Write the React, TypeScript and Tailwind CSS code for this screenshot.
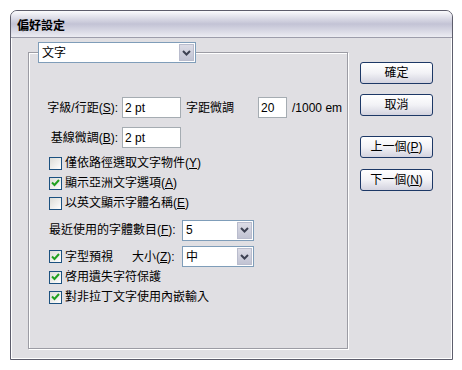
import React from 'react';

function Chevron() {
  return (
    <svg width="9" height="6" viewBox="0 0 9 6" className="block">
      <path d="M1 1l3.5 3.5L8 1" fill="none" stroke="#3d4152" strokeWidth="2" />
    </svg>
  );
}

function Check({ checked = false }: { checked?: boolean }) {
  return (
    <span className="flex h-[13px] w-[13px] shrink-0 items-center justify-center border border-[#1c5180] bg-gradient-to-br from-[#dcdcd7] to-white">
      {checked && (
        <svg width="9" height="8" viewBox="0 0 9 8" className="block">
          <path d="M1 3.5l2.5 2.5L8 1" fill="none" stroke="#21a121" strokeWidth="2" />
        </svg>
      )}
    </span>
  );
}

function Dropdown({ value, width }: { value: string; width: string }) {
  return (
    <div className={`flex h-[21px] ${width} border border-[#7f9db9] bg-white p-px`}>
      <div className="flex flex-1 items-center pl-[2px] leading-none">{value}</div>
      <div className="flex w-[15px] items-center justify-center border border-[#b9bccd] bg-gradient-to-b from-[#dcdce6] to-[#c1c3d3]">
        <Chevron />
      </div>
    </div>
  );
}

function TextBox({ value, width }: { value: string; width: string }) {
  return (
    <div className={`flex h-[21px] ${width} items-center border border-[#a5acb2] bg-white pl-[2px] leading-none`}>
      {value}
    </div>
  );
}

function CheckRow({ checked, children }: { checked?: boolean; children: React.ReactNode }) {
  return (
    <div className="flex h-[20px] items-center gap-[3px] pl-[20px]">
      <Check checked={checked} />
      <span className="leading-none">{children}</span>
    </div>
  );
}

function DlgButton({ children, className = '' }: { children: React.ReactNode; className?: string }) {
  return (
    <button className={`flex h-[22px] w-[73px] items-center justify-center rounded-[3px] border border-[#1d3866] bg-gradient-to-b from-white via-[#f2f2f6] to-[#d3d3df] leading-none ${className}`}>
      {children}
    </button>
  );
}

export default function App() {
  return (
    <div className="h-[370px] w-[462px] bg-white pl-[10px] pt-[10px] text-[12px] text-black font-['Liberation_Sans','Noto_Sans_CJK_TC',sans-serif]">
      <div className="flex h-[350px] w-[443px] flex-col rounded-t-[7px] border border-[#5d5d6c] bg-[#e0dfe3]">
        {/* title bar */}
        <div className="flex h-[26px] items-center rounded-t-[6px] bg-gradient-to-b from-[#fbfbfd] via-[#c3c3d5] to-[#ececf2] pl-[6px] pt-[4px]">
          <span className="font-bold leading-none">偏好設定</span>
        </div>

        <div className="flex flex-1 border-t border-[#9d9dab] shadow-[inset_1px_0_0_#fff,inset_-1px_0_0_#fff,inset_0_-1px_0_#fff]">
          {/* group box */}
          <div className="ml-[17px] mt-[14px] h-[297px] w-[320px] border border-[#9c9ca4] shadow-[1px_1px_0_#fff,inset_1px_1px_0_#fff]">
            <div className="-mt-[11px] ml-[9px] w-fit bg-[#e0dfe3]">
              <Dropdown value="文字" width="w-[158px]" />
            </div>

            <div className="mt-[34px] flex h-[21px] items-center">
              <span className="w-[89px] text-right leading-none">
                字級/行距(<u>S</u>):
              </span>
              <span className="w-[4px]" />
              <TextBox value="2 pt" width="w-[59px]" />
              <span className="ml-[5px] leading-none">字距微調</span>
              <span className="ml-[24px]">
                <TextBox value="20" width="w-[29px]" />
              </span>
              <span className="ml-[5px] leading-none">/1000 em</span>
            </div>

            <div className="mt-[9px] flex h-[21px] items-center">
              <span className="w-[89px] text-right leading-none">
                基線微調(<u>B</u>):
              </span>
              <span className="w-[4px]" />
              <TextBox value="2 pt" width="w-[59px]" />
            </div>

            <div className="mt-[5px]">
              <CheckRow>
                僅依路徑選取文字物件(<u>Y</u>)
              </CheckRow>
              <CheckRow checked>
                顯示亞洲文字選項(<u>A</u>)
              </CheckRow>
              <CheckRow>
                以英文顯示字體名稱(<u>E</u>)
              </CheckRow>
            </div>

            <div className="mt-[6px] flex h-[22px] items-center pl-[20px]">
              <span className="w-[133px] leading-none">
                最近使用的字體數目(<u>F</u>):
              </span>
              <Dropdown value="5" width="w-[72px]" />
            </div>

            <div className="mt-[5px] flex h-[21px] items-center pl-[20px]">
              <Check checked />
              <span className="ml-[3px] w-[67px] leading-none">字型預視</span>
              <span className="w-[50px] leading-none">
                大小(<u>Z</u>):
              </span>
              <Dropdown value="中" width="w-[72px]" />
            </div>

            <CheckRow checked>啓用遺失字符保護</CheckRow>
            <CheckRow checked>對非拉丁文字使用內嵌輸入</CheckRow>
          </div>

          {/* buttons */}
          <div className="ml-[12px] flex flex-col">
            <DlgButton className="mt-[24px]">確定</DlgButton>
            <DlgButton className="mt-[10px]">取消</DlgButton>
            <DlgButton className="mt-[20px]">
              上一個(<u>P</u>)
            </DlgButton>
            <DlgButton className="mt-[11px]">
              下一個(<u>N</u>)
            </DlgButton>
          </div>
        </div>
      </div>
    </div>
  );
}
